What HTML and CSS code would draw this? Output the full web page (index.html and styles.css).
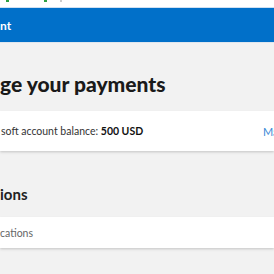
FILE: index.html
```html
<!DOCTYPE html>
<html>
<head>
<meta charset="utf-8">
<link rel="stylesheet" href="styles.css">
</head>
<body>
<div class="top">
  <span class="mark m1"></span><span class="mark m2"></span><span class="mark m3"></span>
</div>
<header class="bar"><span class="brand">nt</span></header>
<main class="page">
  <h1 class="title">ge your payments</h1>
  <section class="card balance">
    <span class="label">soft account balance: <b>500 USD</b></span>
    <a class="link">Ma</a>
  </section>
  <h2 class="subtitle">ions</h2>
  <section class="card row">
    <span class="muted">cations</span>
  </section>
</main>
</body>
</html>
```
FILE: styles.css
```css
html, body { margin: 0; padding: 0; }
body {
  width: 274px; height: 274px; overflow: hidden;
  background: #f2f2f2;
  font-family: Lato, "Open Sans", sans-serif;
  color: #1a1a1a;
}
.top { height: 7px; background: #fff; position: relative; }
.mark { position: absolute; top: 0; height: 2px; width: 3px; background: #2ea043; }
.m1 { left: 6px; } .m2 { left: 44px; } .m3 { left: 60px; background: #ccc; width: 2px; }
.bar {
  height: 34px; background: #0170c9;
  border-top: 1px solid #cfe0f2; border-bottom: 1px solid #dfe6ee;
  display: flex; align-items: center;
}
.brand { color: #fff; font-weight: 700; font-size: 12px; }
.page { padding-top: 26px; }
.title { margin: 0 0 12px; font-size: 21px; font-weight: 900; line-height: 30px; white-space: nowrap; }
.card {
  background: #fff; display: flex; align-items: center; font-size: 10.5px;
  box-shadow: 0 1px 2px rgba(0,0,0,0.12), 0 2px 3px rgba(0,0,0,0.05);
}
.balance { height: 40px; justify-content: space-between; padding-left: 1px; }
.label { color: #333; white-space: nowrap; }
.label b { color: #111; }
.link { color: #3a8ad6; width: 11px; overflow: hidden; white-space: nowrap; font-size: 11px; }
.subtitle { margin: 30px 0 10px; font-size: 15px; font-weight: 700; line-height: 26px; color: #222; }
.row { height: 31px; }
.muted { color: #666; white-space: nowrap; font-size: 10.5px; }
```
